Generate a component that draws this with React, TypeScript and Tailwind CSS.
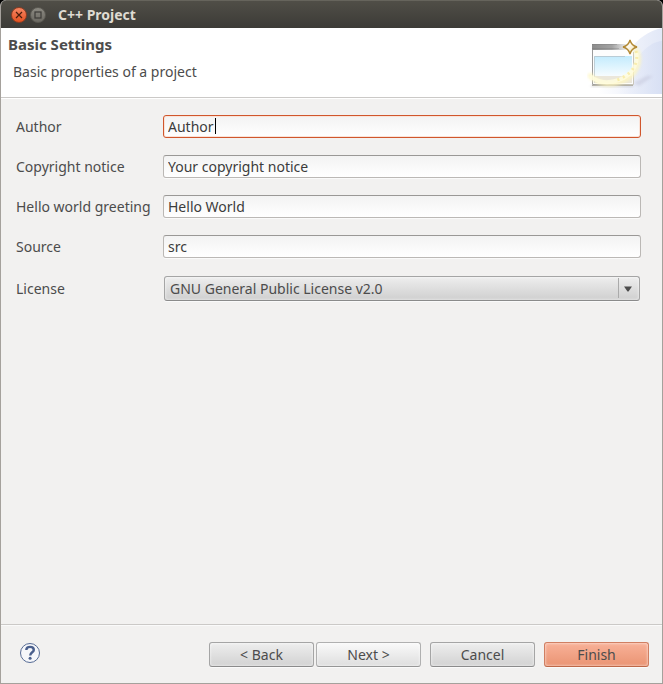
import { useState } from 'react';

interface ButtonProps {
  label: string;
  className?: string;
}

const fields = [
  { id: 'author', label: 'Author', value: 'Author' },
  { id: 'copyright', label: 'Copyright notice', value: 'Your copyright notice' },
  { id: 'greeting', label: 'Hello world greeting', value: 'Hello World' },
  { id: 'source', label: 'Source', value: 'src' },
];

function WizardBanner() {
  return (
    <svg width="75" height="66" viewBox="0 0 75 66" className="shrink-0" aria-hidden="true">
      <defs>
        <linearGradient id="sweep" x1="0" y1="0" x2="1" y2="0">
          <stop offset="0" stopColor="#ffffff" />
          <stop offset="0.5" stopColor="#f0f3fb" />
          <stop offset="1" stopColor="#e2e8f7" />
        </linearGradient>
        <linearGradient id="sweepInner" x1="0" y1="0" x2="1" y2="0">
          <stop offset="0" stopColor="#e3e9f8" stopOpacity="0" />
          <stop offset="1" stopColor="#d8e0f4" />
        </linearGradient>
        <linearGradient id="bar" x1="0" y1="0" x2="1" y2="0">
          <stop offset="0" stopColor="#8c8c8c" />
          <stop offset="0.5" stopColor="#a3a3a3" />
          <stop offset="0.9" stopColor="#f6f6f6" />
        </linearGradient>
        <linearGradient id="pane" x1="0" y1="0" x2="0" y2="1">
          <stop offset="0" stopColor="#c3ebfd" />
          <stop offset="1" stopColor="#f6fcff" />
        </linearGradient>
        <linearGradient id="frame" x1="0" y1="0" x2="1" y2="0">
          <stop offset="0" stopColor="#9c9c9c" />
          <stop offset="1" stopColor="#c9c6ba" />
        </linearGradient>
        <linearGradient id="star" x1="0" y1="0" x2="1" y2="1">
          <stop offset="0.3" stopColor="#ffffff" />
          <stop offset="1" stopColor="#f3dfa0" />
        </linearGradient>
        <filter id="soft" x="-30%" y="-30%" width="160%" height="160%">
          <feGaussianBlur stdDeviation="1.5" />
        </filter>
      </defs>
      <path d="M75 0C62 3 50 10 42 24L10 66H75Z" fill="url(#sweep)" />
      <path d="M75 13C62 14 48 26 30 66H75Z" fill="url(#sweepInner)" />
      <path d="M46 55L60 48L66 48L52 58Z" fill="#a9a9c2" opacity="0.3" filter="url(#soft)" />
      <path d="M4 57H46V59H4Z" fill="#8c8c8c" opacity="0.3" filter="url(#soft)" />
      <rect x="5" y="16" width="41" height="41" fill="#fdfdfd" />
      <path d="M5.500 16V56.500H46.500V24" fill="none" stroke="url(#frame)" />
      <path d="M5 57.500H46" stroke="#b5b2a8" />
      <rect x="5" y="16" width="40" height="6" fill="url(#bar)" />
      <path d="M5 16.500H30M5 20.500H32" stroke="#6f6f6f" strokeOpacity="0.3" />
      <rect x="7" y="28" width="38" height="20" fill="url(#pane)" />
      <path d="M7.500 55V28.500H38" fill="none" stroke="#b3bfc5" strokeOpacity="0.7" />
      <rect x="8" y="48" width="37" height="7" fill="#ebe7db" />
      <path d="M48 20C56 32 50 48 33 54C20 59 8 54 2 46" fill="none" stroke="#fff7c0" strokeWidth="5" opacity="0.8" filter="url(#soft)" />
      <path d="M49 24C52 36 45 47 32 52C20 56 10 54 3 48" fill="none" stroke="#fffce0" strokeWidth="4" opacity="0.8" />
      <path d="M49 23C52 35 46 46 30 52" fill="none" stroke="#f5e48c" strokeWidth="3" strokeDasharray="2 4" opacity="0.6" />
      <path d="M43 12C44 16 46 18 50 19C46 20 44 22 43 26C42 22 40 20 36 19C40 18 42 16 43 12Z" fill="url(#star)" stroke="#b38a35" strokeWidth="1.400" />
    </svg>
  );
}

function WizardButton({ label, className = 'border-[#a5a5a5] border-b-[#8b8b8b] from-[#eeeeee] to-[#d2d2d2]' }: ButtonProps) {
  return (
    <button
      type="button"
      className={`h-[25px] w-[105px] rounded-[3px] border bg-linear-to-b text-sm text-[#4c4c4c] shadow-[inset_0_0_3px_rgba(255,255,255,0.8),0_1px_0_#fafafa] ${className}`}
    >
      {label}
    </button>
  );
}

export default function App() {
  const [form, setForm] = useState<Record<string, string>>({
    author: fields[0].value,
    copyright: fields[1].value,
    greeting: fields[2].value,
    source: fields[3].value,
  });

  return (
    <div className="bg-black font-['Noto_Sans','Open_Sans',sans-serif] text-sm text-[#4c4c4c]">
      <div className="flex min-h-screen flex-col overflow-hidden rounded-t-md border border-t-0 border-[#a5a19c] bg-[#f2f1f0]">
        <div className="-mx-px flex h-7 items-center gap-[2px] rounded-t-md border-t border-[#66645c] bg-linear-to-b from-[#504e47] to-[#3c3b37] pl-[11px]">
          <button type="button" aria-label="Close" className="flex size-4 items-center justify-center rounded-full border border-[#8f3d22] bg-linear-to-b from-[#f58561] to-[#e4501c]">
            <svg width="8" height="8" viewBox="0 0 8 8" aria-hidden="true">
              <path d="M1 1L7 7M7 1L1 7" stroke="#4b1d0c" strokeWidth="1.200" />
            </svg>
          </button>
          <button type="button" aria-label="Maximize" className="ml-px flex size-4 items-center justify-center rounded-full border border-[#5b5952] bg-linear-to-b from-[#8b8981] to-[#6b6962]">
            <svg width="8" height="8" viewBox="0 0 8 8" aria-hidden="true">
              <rect x="1" y="1" width="6" height="6" fill="none" stroke="#3c3b37" strokeWidth="1.200" />
            </svg>
          </button>
          <span className="ml-[10px] text-sm leading-5 font-bold text-[#dfdbd2]">C++ Project</span>
        </div>

        <header className="flex h-[70px] items-start justify-between border-b border-[#cbc9c7] bg-white pl-[7px]">
          <div className="pt-[6px]">
            <h1 className="text-[15px] leading-5 font-bold">Basic Settings</h1>
            <p className="mt-2 pl-[5px] leading-5">Basic properties of a project</p>
          </div>
          <WizardBanner />
        </header>

        <main className="grow border-t border-white pr-[21px] pl-[15px]">
          <form className="grid grid-cols-[147px_1fr] items-center gap-y-[17px] pt-4">
            {fields.map((f, i) => (
              <div key={f.id} className="col-span-2 grid h-[23px] grid-cols-subgrid items-center">
                <label htmlFor={f.id}>{f.label}</label>
                <div className="relative">
                  <input
                    id={f.id}
                    type="text"
                    value={form[f.id]}
                    onChange={(e) => setForm({ ...form, [f.id]: e.target.value })}
                    className={`block h-[23px] w-full rounded-[3px] border bg-linear-to-b from-[#f3f3f3] to-white px-1 text-sm text-[#3c3c3c] caret-transparent outline-none ${
                      i === 0
                        ? 'border-[#d0562c] shadow-[inset_0_0_0_1px_#fae3d8]'
                        : 'border-[#bbb8b5] border-t-[#9a9896] shadow-[0_1px_0_#fafafa]'
                    }`}
                  />
                  {i === 0 && <span className="absolute top-[3px] left-[52px] h-4 w-px bg-black" />}
                </div>
              </div>
            ))}
            <label htmlFor="license" className="pt-px">License</label>
            <div className="relative mx-px pt-px">
              <select
                id="license"
                className="block h-[25px] w-full appearance-none rounded-[3px] border border-[#a5a5a5] border-b-[#8b8b8b] bg-linear-to-b from-[#eeeeee] to-[#cfcfcf] px-[5px] text-sm text-[#4c4c4c] shadow-[inset_0_0_3px_rgba(255,255,255,0.8),0_1px_0_#fafafa] outline-none"
              >
                <option>GNU General Public License v2.0</option>
              </select>
              <span className="pointer-events-none absolute inset-y-[3px] right-0 flex w-[22px] items-center border-l border-[#aaaaaa] pt-px pl-1">
                <svg width="10" height="6" viewBox="0 0 10 6" aria-hidden="true">
                  <path d="M1 0.500H9L5.500 5.500H4.500Z" fill="#4c4c4c" />
                </svg>
              </span>
            </div>
          </form>
        </main>

        <footer className="flex h-[59px] items-start border-t border-[#cbc9c7] pt-[17px] pr-[13px] pl-[18px] shadow-[inset_0_1px_0_#fafafa]">
          <button type="button" aria-label="Help">
            <svg width="22" height="22" viewBox="0 0 22 22" aria-hidden="true">
              <circle cx="11" cy="11" r="9.500" fill="#f6f7fa" stroke="#566b94" />
              <path d="M7.300 8C7.300 5.600 9 4.900 11 4.900C13.300 4.900 14.800 6 14.800 7.900C14.800 10.300 11.200 10.200 11.200 13.500" fill="none" stroke="#4a5f8c" strokeWidth="2.400" />
              <circle cx="11.100" cy="16.300" r="1.500" fill="#4a5f8c" />
            </svg>
          </button>
          <div className="ml-auto flex gap-[9px]">
            <div className="flex gap-[2px]">
              <WizardButton label="< Back" />
              <WizardButton label="Next >" className="border-[#b0b0b0] border-b-[#969696] from-[#fafafa] to-[#dedede]" />
            </div>
            <WizardButton label="Cancel" />
            <WizardButton label="Finish" className="border-[#d07f62] border-b-[#bd6848] from-[#f8b198] to-[#ea9473]" />
          </div>
        </footer>
      </div>
    </div>
  );
}
